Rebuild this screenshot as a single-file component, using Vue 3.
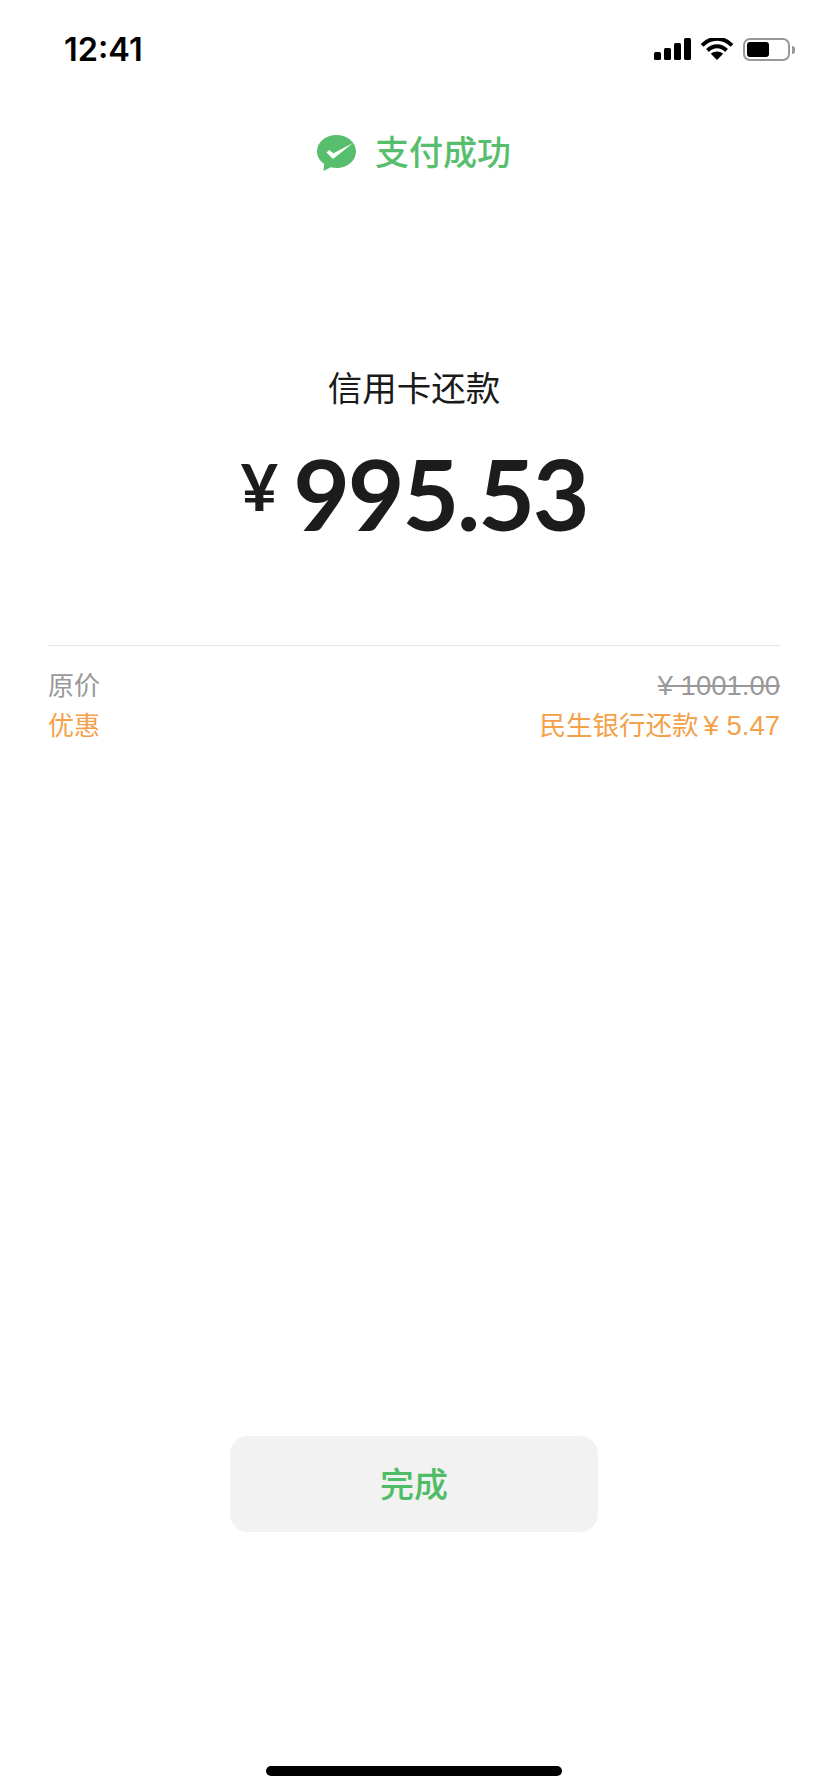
<script setup>
const rows = [
  { label: '原价', value: '¥ 1001.00', tone: 'muted', strike: true },
  { label: '优惠', note: '民生银行还款', value: '¥ 5.47', tone: 'orange', strike: false },
]
</script>

<template>
  <div class="page">
    <div class="status">
      <span class="time">12:41</span>
      <div class="status-icons">
        <svg width="37" height="22" viewBox="0 0 37 22">
          <rect x="0" y="14" width="7" height="8" rx="1.5" />
          <rect x="10" y="10" width="7" height="12" rx="1.5" />
          <rect x="20" y="5" width="7" height="17" rx="1.5" />
          <rect x="30" y="0" width="7" height="22" rx="1.5" />
        </svg>
        <svg width="32" height="22" viewBox="0 0 32 22">
          <path d="M1 7.500C9.500 -1.500 22.500 -1.500 31 7.500" class="wave" />
          <path d="M6.500 12.500C12 6.800 20 6.800 25.500 12.500" class="wave" />
          <path d="M16 22L9.800 15.800C13.400 12.600 18.600 12.600 22.200 15.800Z" />
        </svg>
        <div class="battery">
          <div class="battery-body"><div class="battery-fill"></div></div>
          <div class="battery-nub"></div>
        </div>
      </div>
    </div>

    <div class="result">
      <svg class="result-icon" width="39" height="36" viewBox="0 0 39 36">
        <path d="M19.500 0C30.300 0 39 7.400 39 16.500C39 25.600 30.300 33 19.500 33C17.500 33 15.500 32.700 13.700 32.200L6.500 36L7.200 29C2.800 26 0 21.500 0 16.500C0 7.400 8.700 0 19.500 0Z" fill="#56be6c" />
        <path d="M9.500 17.500L12 15L16.500 18.200L36 8L16 24Z" fill="#fff" />
      </svg>
      <span>支付成功</span>
    </div>

    <div class="merchant">信用卡还款</div>
    <div class="amount"><span class="yen">¥</span><span class="digits">995.53</span></div>

    <div class="detail">
      <div v-for="row in rows" :key="row.label" class="row" :class="row.tone">
        <span>{{ row.label }}</span>
        <span class="row-value">
          <span v-if="row.note" class="note">{{ row.note }}</span>
          <span class="num" :class="{ strike: row.strike }">{{ row.value }}</span>
        </span>
      </div>
    </div>

    <div class="spacer"></div>
    <button class="done">完成</button>
    <div class="home-bar"></div>
  </div>
</template>

<style scoped>
.page {
  width: 828px;
  height: 1792px;
  display: flex;
  flex-direction: column;
  align-items: center;
  background: #fff;
  font-family: "Liberation Sans", "Noto Sans CJK SC", sans-serif;
}
.status {
  width: 100%;
  box-sizing: border-box;
  height: 74px;
  padding: 34px 33px 0 64px;
  display: flex;
  justify-content: space-between;
}
.time {
  font-family: Inter, "Liberation Sans", sans-serif;
  font-size: 32.500px;
  font-weight: 600;
  line-height: 32px;
  color: #000;
}
.status-icons {
  display: flex;
  align-items: flex-start;
  gap: 10px;
  padding-top: 4px;
}
.status-icons svg { fill: #000; }
.wave { fill: none; stroke: #000; stroke-width: 4; }
.battery { display: flex; align-items: center; gap: 2px; }
.battery-body {
  width: 47px;
  height: 23px;
  box-sizing: border-box;
  border: 2px solid #999;
  border-radius: 7px;
  padding: 2px;
}
.battery-fill { width: 22px; height: 100%; background: #000; border-radius: 3px; }
.battery-nub { width: 3px; height: 8px; background: #999; border-radius: 0 3px 3px 0; }
.result {
  margin-top: 56px;
  display: flex;
  align-items: center;
  gap: 19px;
  height: 40px;
  font-size: 34px;
  font-weight: 500;
  color: #56be6c;
}
.result-icon { margin-top: 5px; }
.merchant {
  margin-top: 197px;
  font-size: 34.500px;
  line-height: 44px;
  color: #1a1a1a;
}
.amount {
  margin-top: 27px;
  display: flex;
  align-items: center;
  gap: 15px;
  font-family: Lato, "Liberation Sans", sans-serif;
  font-size: 98px;
  font-weight: 700;
  line-height: 110px;
  color: #1c1c1c;
}
.digits { letter-spacing: -2.200px; }
.yen { font-size: 65px; line-height: 1; padding-bottom: 13px; }
.detail {
  margin-top: 97px;
  width: 732px;
  border-top: 1px solid #e5e5e5;
  padding-top: 17px;
}
.row {
  display: flex;
  justify-content: space-between;
  align-items: center;
  height: 40px;
  font-size: 26px;
}
.row-value { display: flex; align-items: center; gap: 5px; }
.note { font-size: 26.500px; }
.num { font-size: 27.500px; margin-top: 6px; }
.muted { color: #999; }
.orange { color: #f5a04a; }
.strike { text-decoration: line-through; }
.spacer { flex: 1; }
.done {
  width: 368px;
  height: 96px;
  border: none;
  border-radius: 18px;
  background: #f2f2f2;
  color: #4fbd66;
  font-family: inherit;
  font-size: 34px;
  font-weight: 500;
  padding: 0 0 4px;
}
.home-bar {
  width: 296px;
  height: 10px;
  margin: 234px 0 16px;
  border-radius: 5px;
  background: #000;
}
</style>
